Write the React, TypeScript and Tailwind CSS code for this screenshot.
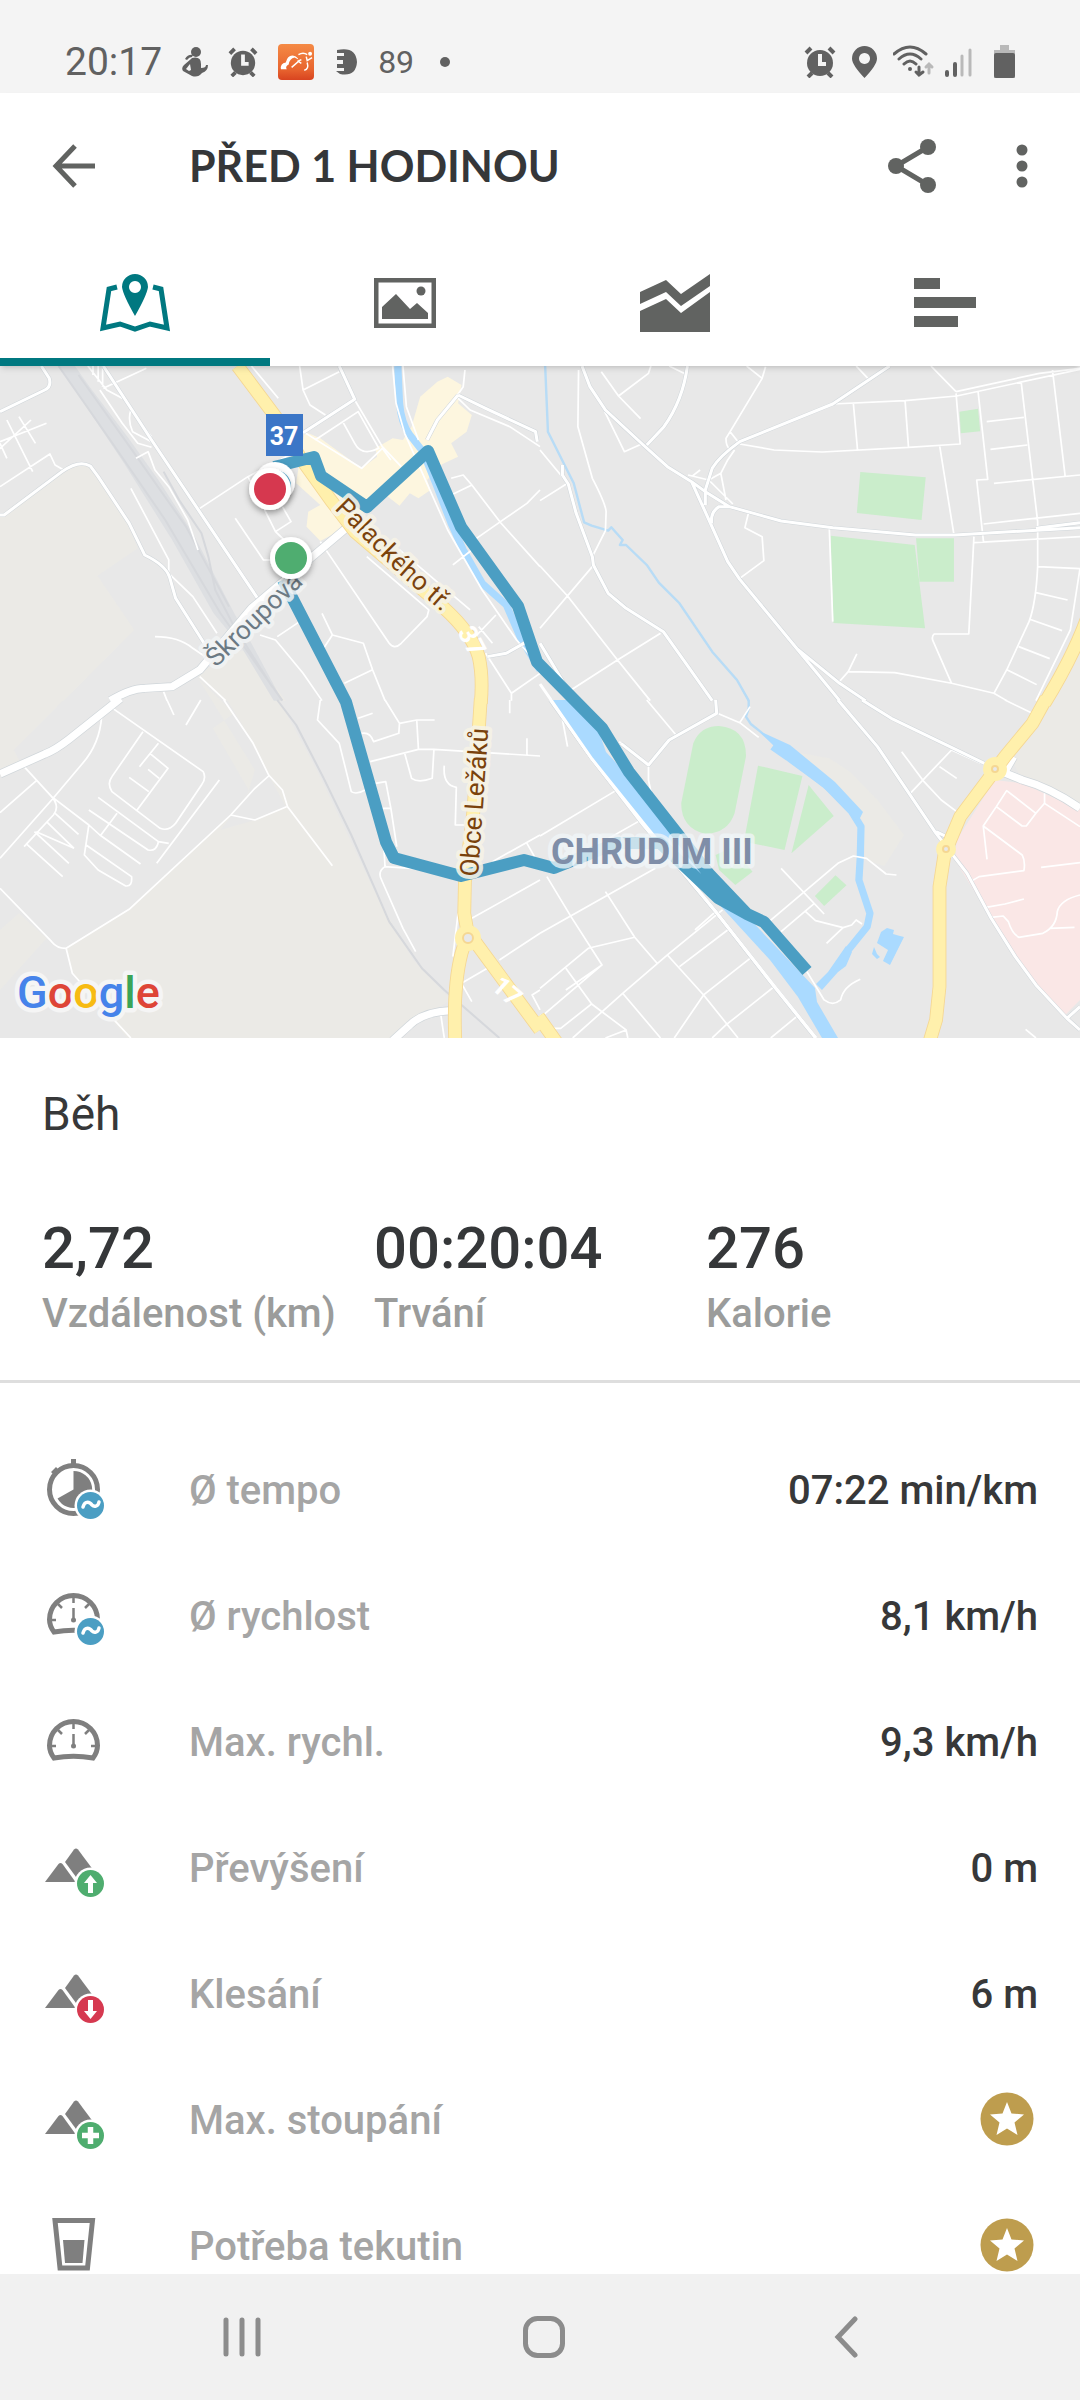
import type { ReactNode } from 'react'

/**
 * Activity detail screen: status bar, tabs, route map and session metrics
 */

type LayerName = 'field' | 'commercial' | 'hospital' | 'park' | 'yard' | 'rail' | 'stream' | 'river' | 'lane' | 'road' | 'avenue' | 'highway'

type Tile = { x: number; y: number } & Partial<Record<LayerName, string>>

// Each tile covers 540 map units across and draws in its own finer grid
const TILES: Tile[] = [
  {
    x: 0,
    y: 360,
    field:
      'M0 465 L180 335 Q230 300 270 325 L350 440 L400 565 L283 647 L390 810 L185 1022 H0Z M575 950 L655 880 L720 870 L830 1022 H650Z',
    commercial:
      'M885 215 L930 235 L1050 325 L1095 290 L1090 265 L1140 235 L1170 240 L1195 200 L1220 110 L1270 65 L1300 50 L1340 75 L1330 130 L1370 165 L1355 215 L1310 250 L1330 290 L1285 312 L1240 360 L1250 390 L1215 415 L1190 400 L1160 437 L1120 405 L1085 430 L1060 450 L1000 505 L930 543 L890 500 L895 455 L930 435 L860 370 L870 300Z',
    yard:
      'M168 10 H212 L260 80 L370 230 L460 360 L560 520 L680 760 L730 850 L820 1022 H795 L700 860 L620 760 L500 540 L360 310 L270 170Z',
    rail:
      'M170 18 L320 240 L480 480 L640 760 L820 1022 M228 45 L380 265 L540 500 L665 740 M475 335 L520 420 L585 520 L605 590 L625 690 L680 800 L790 980',
    river: 'M1155 18 L1160 130 Q1165 190 1190 225 L1228 275 L1265 370 L1310 490 L1345 570 L1400 670 L1470 735 L1510 830 L1568 930',
    lane:
      'M20 180 L95 335 M55 170 L103 250 M0 250 L20 295 M0 245 L135 190 M-5 270 L90 180 M0 380 L145 282 L160 315 L185 330 M255 18 L310 90 L355 115 M300 85 L425 25 M270 18 V45 M285 18 V65 M298 18 V80 M290 90 L355 190 L400 250 L440 262 M440 230 L380 150 Q370 180 385 215 L440 245 M395 295 L430 275 L450 330 L490 380 L545 480 L575 570 M380 385 L490 600 L490 640 M730 18 L808 115 M870 18 L880 90 L900 135 L945 165 M880 90 L985 35 M915 240 L1040 155 L1100 265 Q1050 290 1030 250 L995 185 M1030 120 L1110 260 L1165 320 M880 215 L1050 325 L1110 265 L1135 300 M580 445 L720 350 L850 280 M720 350 L800 515 L845 485 L820 440 M683 475 L765 600 H800 M800 515 L845 560 M930 545 L1130 850 Q1145 870 1165 850 L1240 770 L1245 750 L1065 590 M1160 570 L1365 750 M1140 18 L1150 130 L1175 220 L1300 510 L1400 690 L1500 840 L1568 920 M1170 18 L1180 140 L1215 240 M1310 355 L1345 345 L1370 375 L1455 490 L1568 620 M1310 405 L1370 375 M1370 545 L1530 430 L1568 390 M1315 615 L1370 570 M755 825 L800 840 L820 865 L880 940 L935 1022 M805 830 L870 785 M935 760 L965 825 L930 880 M965 825 L1055 850 L1082 930 L1118 1022 M1000 970 L1080 930 M450 830 Q520 830 560 865 L610 900 M490 640 L560 710 L630 820 M1350 30 L1345 80 L1325 110 L1365 150 L1480 200 L1568 260 M1410 880 L1485 1000 L1568 940 M1485 1000 V1022 M1380 830 L1440 765 M1390 800 L1430 850 M580 950 L655 1022 M475 995 L485 1022',
    road:
      'M0 155 L130 90 Q150 80 143 55 L120 18 M0 465 H12 L180 335 Q230 298 262 318 L285 350 L375 490 L420 585 Q480 615 492 650 L510 715 L605 870 M300 18 L440 240 L750 718 M985 18 L1030 118 L880 218 M1330 105 L1270 180 L1240 240 M1330 105 L1410 145 L1555 215 L1560 245 M1415 890 L1470 880 L1530 845 M755 720 L640 900',
    avenue: 'M320 1022 Q380 985 420 985 L500 980 L580 930 L730 745 L850 640 L1010 500',
    highway: 'M690 18 L800 170 L870 290 L960 420 L1030 515 L1290 745 Q1370 820 1390 890 Q1403 950 1396 1030',
  },
  {
    x: 540,
    y: 360,
    field: 'M1568 860 L1490 1022 H1568Z',
    park: 'M930 336 L1120 352 L1108 480 L920 459Z M1218 155 L1272 146 L1278 214 L1222 220Z M844 527 L1088 555 L1118 805 L852 789Z M1092 535 H1202 V665 H1102Z',
    stream: 'M15 18 L23 215 L98 370 L128 487 L150 497 L198 512 L207 502 L240 540 L232 555 L250 555 L310 615 L345 668 L405 730 L500 875 L572 960 L606 1022',
    lane:
      'M112 30 L110 200 L152 355 Q190 430 192 455 L190 512 L152 590 M0 270 L80 370 L0 422 M0 618 L80 708 L225 900 L320 1022 M152 620 L0 805 M350 820 L225 900 L90 990 M178 35 L228 108 L292 176 M228 108 L315 40 L322 18 M188 155 L245 275 L300 250 M375 18 L418 40 M600 18 L645 55 L655 20 M645 55 L552 215 L540 235 Q540 260 550 265 M552 215 L575 245 M918 18 L952 55 M1135 18 L1208 95 M580 252 L680 270 L820 276 L1070 262 L1220 252 L1208 100 M850 132 L1060 122 L1210 108 L1568 28 M910 132 L922 270 M1060 122 L1070 262 M1160 255 L1202 525 M1208 95 L1450 40 L1568 25 M1272 95 L1300 358 L1268 360 L1288 548 M1260 548 L1568 530 M1288 492 L1568 460 M1397 65 L1445 485 V620 Q1440 730 1420 785 L1355 930 L1318 1000 M1297 185 L1405 172 M1308 268 L1415 255 M1318 370 L1568 345 M1488 30 L1525 350 M1445 620 L1568 626 M1440 698 L1532 720 M1422 778 L1516 812 M1390 860 L1480 896 M1357 930 L1442 974 M1260 530 L1245 822 H1145 Q1135 830 1142 845 L1195 970 M840 505 L850 785 M605 460 L595 503 L645 530 L650 602 L580 655 M920 882 L895 935 L865 970 M895 935 L1030 938 L1195 970 L1318 1000 L1355 1022 M430 345 L490 360 L525 340 L545 300 L565 270 M440 350 L465 330 M490 360 L560 432 M525 340 L540 420 M1568 625 L1540 810 L1440 1022',
    road:
      'M122 18 L145 80 L190 150 L300 255 L370 320 L440 365 L480 395 L550 440 L700 483 L850 503 L1090 525 H1205 L1568 503 M1440 505 L1568 488 M428 18 Q415 120 360 200 L310 255 M1015 18 L850 132 L580 245 Q520 290 500 325 L480 390 V435 M440 365 L495 490 L545 605 L580 658 L745 865 L870 1022 M745 865 L870 970 L945 1022 M550 440 L520 440 Q495 455 498 490 M65 315 V345 L82 372 L105 460 L152 590 L155 615 L198 700 L250 745 L358 815 L420 905 L500 1022 M0 850 L100 1022',
    highway: 'M1600 740 Q1560 870 1465 1030',
  },
  {
    x: 0,
    y: 700,
    field:
      'M0 0 H185 L40 150 L60 190 L0 230Z M575 -65 L680 40 L618 85 L725 275 L640 390 L740 360 L830 320 L780 225 L700 70 L660 0 H810 L920 210 L1100 600 L1200 780 L1310 900 L1230 950 L1140 1014 H370 L210 820 L195 745 L375 630 L670 345 L720 280 L740 210Z M0 690 L55 640 L135 715 L0 870Z',
    rail: 'M805 0 L860 75 L940 235 L1020 405 L1090 570 L1130 665 L1225 805 L1290 870 L1450 1014',
    lane:
      'M320 20 L590 215 Q600 235 585 255 L510 370 Q490 395 465 385 L325 275 Q310 250 325 230 L415 95 M295 50 Q290 130 240 190 L150 300 L0 475 M70 200 L150 290 L258 375 L290 405 L408 492 M0 338 L105 243 M150 290 Q175 320 155 345 L70 440 M105 395 L215 445 M75 430 L182 530 M100 395 L200 490 M135 365 L215 445 M160 340 L228 403 M258 375 L245 465 L285 510 L365 558 Q385 560 382 530 L250 435 M258 330 L430 450 Q455 455 460 425 L285 292 M460 425 L490 430 M455 490 L637 240 M340 340 L293 405 M460 130 L405 200 M435 160 L488 205 L398 330 M430 208 L462 235 M375 232 L432 275 M0 565 L150 725 Q165 745 192 745 L375 628 L670 345 L740 265 L780 228 M192 745 L210 820 L300 925 L380 1014 M670 345 L740 360 L832 320 M650 0 L735 130 L780 225 L820 270 L835 320 L965 497 M485 0 L505 45 M583 0 L540 75 M930 0 L922 60 L985 130 L1020 275 Q1035 285 1060 270 M1040 55 L1082 40 M1118 0 L1160 70 L1158 100 L1085 125 Q1075 95 1050 100 M1160 70 L1210 60 H1262 M1210 60 L1215 148 L1075 185 M1215 148 H1260 L1568 168 M1175 160 L1195 235 Q1215 250 1255 235 L1260 148 M1530 115 V165 M1290 197 Q1285 255 1325 262 L1322 375 H1350 M1090 250 L1120 245 L1135 325 L1152 440 M1110 325 H1135 M1115 450 L1118 500 Q1095 515 1108 540 L1170 685 L1207 755 M1115 500 L1300 512 M1370 655 L1568 540 M1430 485 L1568 405 M1530 430 L1552 470 M1450 780 L1568 700 M1340 850 L1440 790 M1340 850 L1370 905 M1480 0 V40 M1280 945 L1290 1014 M1330 640 L1315 770 M1568 870 L1545 885 L1568 930',
    avenue: 'M0 222 L130 162 Q160 150 200 118 L350 -5 M1140 1022 L1190 975 Q1230 935 1310 932',
    highway: 'M1396 -5 L1375 330 L1350 545 L1348 640 L1358 700 L1340 760 Q1315 860 1322 1022 M1362 700 L1390 740 L1568 990',
  },
  {
    x: 540,
    y: 700,
    field: 'M735 155 L840 175 L900 215 L980 300 L1057 405 L1000 498 L945 480 L935 360 L850 260Z M1480 -10 H1568 V315 L1390 220 L1370 180Z',
    hospital: 'M1320 240 L1400 250 L1568 330 V900 L1525 945 L1440 860 L1300 640 L1205 480 L1210 420Z',
    park: 'M445 130 Q465 78 520 78 Q600 85 598 170 L565 340 Q545 400 480 402 Q410 385 410 310Z M633 197 L762 228 L710 450 L592 425Z M780 255 L853 348 L730 460Z M510 465 L560 440 L617 515 L567 555 L520 510Z M858 526 L890 556 L825 618 L798 588Z',
    stream: 'M606 0 V25 L598 50 L612 72 L640 95 L700 150',
    river: 'M675 140 L720 172 L830 255 L905 335 L932 380 L930 470 L926 540 L958 640 L950 680 L895 750',
    lane:
      'M60 30 L80 140 M220 272 L0 408 M290 362 L140 450 M310 0 L395 105 M515 40 L580 68 L610 20 M580 68 L635 112 M230 125 L315 195 V240 L325 290 M700 505 L825 642 M665 665 L865 490 L910 468 L948 475 L1005 522 L1035 525 M700 695 L795 612 M768 632 L800 662 L880 683 L905 675 L918 660 L935 672 M880 683 L832 730 M775 815 L825 900 Q850 920 873 900 Q880 860 930 838 M1050 155 L1115 245 L1165 300 L1210 335 M1195 150 L1075 280 M1160 200 L1210 235 M1195 150 L1280 190 M530 630 L370 765 L240 880 L95 1014 M510 635 L450 690 M545 690 L405 800 M610 775 L475 885 L390 1014 M680 860 L540 975 L500 1014 M745 950 L670 1014 M20 530 L90 650 L180 795 L75 870 M0 700 L335 505 M190 575 L275 712 L340 790 M0 865 L140 745 L275 712 M10 945 L180 795 M75 805 L150 912 L250 990 L255 1014 M250 990 L190 1014 M0 945 L40 985 H60 L150 912 M240 880 L350 1014 M370 765 L475 885 L575 1014 M1410 988 L1440 1014 M1325 320 L1355 272 L1440 340 L1412 378 H1400 L1325 320 L1287 378 L1298 478 M1287 378 L1400 465 Q1410 485 1405 512 L1275 530 L1250 545 M1440 340 L1465 310 L1568 380 M1465 310 V280 M1455 502 L1568 488 M1295 622 L1350 612 L1405 597 M1310 652 L1345 648 L1360 665 Q1370 700 1390 712 L1460 700 Q1500 680 1502 635 Q1510 600 1568 585 M1480 685 L1552 682 M1350 0 L1440 45',
    road:
      'M30 0 L150 175 L300 375 L510 635 L680 860 L800 1014 M865 0 L980 140 L1150 400 L1240 520 L1310 655 L1380 770 L1440 855 L1530 955 L1568 990 M935 0 L1020 55 L1190 140 L1290 190 M1530 955 L1568 920 M510 0 L513 40 L375 120 L315 195 L235 130 M1150 395 L1180 410',
    avenue: 'M1340 215 L1400 240 Q1480 262 1568 325 M1375 170 L1350 215',
    highway:
      'M1470 -5 L1430 70 L1350 170 L1318 215 L1220 350 L1175 460 L1160 560 V860 L1150 960 L1132 1022 M-5 950 L50 1030',
  },
]

const LAYERS: { name: LayerName; fill?: string; stroke?: string; width?: number }[] = [
  { name: 'field', fill: '#ebeae6' },
  { name: 'commercial', fill: '#fdf6df' },
  { name: 'hospital', fill: '#fae7e6' },
  { name: 'park', fill: '#caedcb' },
  { name: 'yard', fill: '#dddfe2' },
  { name: 'rail', stroke: '#d6d8dc', width: 6 },
  { name: 'stream', stroke: '#b8dcf6', width: 7 },
  { name: 'river', stroke: '#aadaff', width: 21 },
  { name: 'lane', stroke: '#ffffff', width: 5 },
  { name: 'road', stroke: '#d0d6da', width: 12 },
  { name: 'road', stroke: '#ffffff', width: 9 },
  { name: 'avenue', stroke: '#d0d6da', width: 26 },
  { name: 'avenue', stroke: '#ffffff', width: 22 },
  { name: 'highway', stroke: '#f5d793', width: 40 },
  { name: 'highway', stroke: '#fff0ac', width: 35 },
]

const ROUTE =
  'M274 467 L282 465 L314 457 L321 476 L367 507 L428 451 L461 527 L518 606 L537 662 L602 728 L629 772 L709 874 L747 914 L764 922 L807 971 M747 914 L718 898 L660 843 H617 L554 868 L524 860 L461 876 L394 858 L386 842 L346 702 L283 580'

const GOOGLE = [
  ['G', '#4683ea'],
  ['o', '#de4537'],
  ['o', '#f7bb12'],
  ['g', '#4683ea'],
  ['l', '#3ba457'],
  ['e', '#de4537'],
]

function RouteMap() {
  return (
    <svg viewBox="0 366 1080 672" className="block w-full bg-[#e8e8e8] font-['Roboto',sans-serif]" role="img" aria-label="Mapa trasy">
      <defs>
        <path id="palackeho" d="M334 509 L400 575 L460 628" />
        <filter id="pin-shadow" x="-30%" y="-30%" width="160%" height="170%">
          <feDropShadow dx="0" dy="3" stdDeviation="3" floodOpacity="0.35" />
        </filter>
      </defs>

      {LAYERS.map((layer, i) => (
        <g
          key={i}
          fill={layer.fill ?? 'none'}
          stroke={layer.stroke}
          strokeWidth={layer.width}
          strokeLinejoin="round"
        >
          {TILES.map((tile) => (
            <path
              key={`${tile.x}-${tile.y}`}
              d={tile[layer.name]}
              transform={`translate(${tile.x} ${tile.y}) scale(0.3444 0.3333)`}
            />
          ))}
        </g>
      ))}

      {/* wide part of the river and the pools */}
      <g fill="#aadaff">
        <path d="M553 700 L582 700 L600 735 L606 752 L655 805 L685 850 L730 898 L815 988 L817 1002 L838 1038 H822 L798 997 L770 960 L726 912 L680 862 L640 820 L590 757Z" />
        <path d="M759 731 L790 762 L830 793 L858 822 L863 812 L835 782 L790 745Z" />
        <path d="M846 946 L852 952 L846 966 L838 972 L822 990 L816 984 L828 972Z" />
        <path d="M887 928 L894 930 L893 934 L900 936 L904 937 L897 951 L890 965 L883 961 L888 950 L877 943 L881 932Z M874 947 L877 954 L880 957 L877 959 L872 954Z" />
      </g>
      <path d="M540 684 L592 759 L645 825 L716 912 L775 987 L816 1038" fill="none" stroke="#ffffff" strokeWidth="3" />

      {/* roundabouts */}
      <g fill="#fff0ac" stroke="#f5d793">
        <circle cx="995" cy="769" r="12" stroke="none" />
        <circle cx="946" cy="849" r="10" stroke="none" />
        <circle cx="468" cy="938" r="13" stroke="none" />
        <circle cx="995" cy="769" r="3" fill="#e8e8e8" strokeWidth="2" />
        <circle cx="946" cy="849" r="3" fill="#e8e8e8" strokeWidth="2" />
        <circle cx="468" cy="938" r="5" fill="#e8e8e8" strokeWidth="2" />
      </g>

      <path d={ROUTE} fill="none" stroke="#4b9ec3" strokeWidth="12" strokeLinejoin="round" />

      <g fontSize="26" strokeLinejoin="round" paintOrder="stroke">
        <text fill="#7a420c" stroke="#f6f3e6" strokeOpacity="0.9" strokeWidth="8">
          <textPath href="#palackeho">Palackého tř.</textPath>
        </text>
        <text transform="translate(478 877) rotate(-86)" fill="#7a420c" stroke="#f6f3e6" strokeOpacity="0.9" strokeWidth="8">
          Obce Ležáků
        </text>
        <text transform="translate(216 668) rotate(-44)" fill="#6c7a84" stroke="#f2f4f5" strokeOpacity="0.85" strokeWidth="8">
          Škroupová
        </text>
        <text x="551" y="864" fill="#7f8ea8" stroke="#f1f6f9" strokeOpacity="0.75" strokeWidth="9" fontSize="36" fontWeight="700">
          CHRUDIM III
        </text>
        <text transform="translate(457 632) rotate(62)" fill="#ffffff" fontWeight="700">37</text>
        <text transform="translate(490 988) rotate(42)" fill="#ffffff" fontWeight="700">17</text>
      </g>

      <g filter="url(#pin-shadow)">
        <circle cx="275" cy="482" r="20" fill="#ffffff" />
        <circle cx="275" cy="486" r="16" fill="#4b9ec3" />
      </g>
      <g filter="url(#pin-shadow)">
        <circle cx="270" cy="489" r="21" fill="#ffffff" />
        <circle cx="270" cy="489" r="16" fill="#d63950" />
      </g>
      <g filter="url(#pin-shadow)">
        <circle cx="291" cy="558" r="21" fill="#ffffff" />
        <circle cx="291" cy="558" r="16" fill="#4fad6f" />
      </g>

      <rect x="266" y="414" width="37" height="42" fill="#3b76c7" />
      <text x="284" y="445" textAnchor="middle" fill="#ffffff" fontSize="25" fontWeight="700">37</text>

      <text x="17" y="1008" fontSize="45" fontWeight="500" stroke="#f5f5f5" strokeWidth="9" strokeLinejoin="round" paintOrder="stroke">
        {GOOGLE.map(([letter, color], i) => (
          <tspan key={i} fill={color}>{letter}</tspan>
        ))}
      </text>
    </svg>
  )
}

function AlarmIcon({ className }: { className: string }) {
  return (
    <svg viewBox="0 0 32 32" className={className} fill="none" stroke="#616161">
      <circle cx="16" cy="17" r="13" fill="#616161" stroke="none" />
      <path d="M2 7 L7 2 M30 7 L25 2" strokeWidth="4" />
      <path d="M4 31 L8 27 M28 31 L24 27" strokeWidth="4" />
      <path d="M16 8 V18 H22" stroke="#f4f4f4" strokeWidth="4" />
    </svg>
  )
}

function StatusBar() {
  return (
    <div className="flex h-[93px] shrink-0 items-center justify-between bg-[#f4f4f4] px-[65px] pt-[30px] text-[#616161]">
      <div className="flex items-center gap-5">
        <span className="text-[39px] leading-10">20:17</span>
        <svg viewBox="0 0 26 30" className="w-[26px]" fill="#616161">
          <circle cx="14" cy="5" r="5" />
          <path d="M3 12 Q6 7 11 8 L10 10 Q7 10 5 13Z" />
          <path d="M10 11 Q19 9 19 17 L19 21 Q24 21 24 18 L26 18 Q26 24 20 26 Q16 31 10 29 L1 24 Q-1 21 2 18 L9 12Z" />
          <path d="M4 22 L8 17 L9 23 L7 24Z" fill="#f4f4f4" />
        </svg>
        <AlarmIcon className="w-[30px]" />
        <svg viewBox="0 0 37 37" className="w-9">
          <defs>
            <linearGradient id="app-icon" x1="0" y1="0" x2="0" y2="1">
              <stop offset="0" stopColor="#f58a45" />
              <stop offset="0.7" stopColor="#e8652f" />
              <stop offset="1" stopColor="#d84420" />
            </linearGradient>
          </defs>
          <rect width="37" height="37" rx="4" fill="url(#app-icon)" />
          <path d="M3 26 Q2 20 8 19 Q10 11 16 12 Q20 13 21 16 L17 14 Q12 15 11 21 Q7 23 9 26Z" fill="#ffffff" />
          <path d="M14 24 L21 18 L24 20 M20 18 L24 16 M21 11 Q26 8 30 11 M29 13 L30 17 L35 14 M30 19 Q32 26 27 27" fill="none" stroke="#ffffff" strokeWidth="1.5" />
          <circle cx="33" cy="10" r="2" fill="#ffffff" />
        </svg>
        <svg viewBox="0 0 24 26" className="w-6">
          <path d="M3 1 Q22 -3 23 13 Q22 28 6 25 L2 22 H10 V19 H3 V15 H9 V11 H3 V7 H10 V4 H3Z" fill="#616161" />
        </svg>
        <span className="text-[32px] leading-10">89</span>
        <svg viewBox="0 0 20 10" className="w-5">
          <circle cx="11" cy="5" r="5" fill="#616161" />
        </svg>
      </div>
      <div className="flex items-center gap-4">
        <AlarmIcon className="w-8" />
        <svg viewBox="0 0 25 32" className="w-[25px]">
          <path fillRule="evenodd" d="M12.5 0 A12.5 12.5 0 0 1 25 12.5 Q25 19 12.5 32 Q0 19 0 12.5 A12.5 12.5 0 0 1 12.5 0Z M12.5 7 a5.5 5.5 0 1 0 .01 0Z" fill="#616161" />
        </svg>
        <svg viewBox="0 0 80 34" className="w-20" fill="none" stroke="#616161" strokeWidth="3" strokeLinecap="round">
          <path d="M1 9 Q17 -5 33 9 M6 14 Q17 4 28 14 M11 19 Q17 13 23 19" />
          <circle cx="17" cy="24" r="2" fill="#616161" stroke="none" />
          <path d="M26 22 V30 M23 27 L26 30 L30 27" />
          <path d="M36 28 V20 M33 22 L36 19 L39 22" stroke="#b9b9b9" />
          <path d="M54 27 V30 M62 19 V30" strokeWidth="4" />
          <path d="M69 11 V30 M77 5 V30" stroke="#b9b9b9" />
        </svg>
        <svg viewBox="0 0 26 34" className="w-[26px]">
          <path d="M11 0 H20 V5 H26 V33 H5 V5 H11Z" fill="#b9b9b9" />
          <rect x="5" y="8" width="21" height="25" rx="2" fill="#616161" />
        </svg>
      </div>
    </div>
  )
}

function AppBar() {
  return (
    <header className="flex h-[146px] items-center px-[52px]">
      <button type="button" aria-label="Zpět">
        <svg viewBox="0 0 44 44" className="w-11" fill="none" stroke="#616361" strokeWidth="5">
          <path d="M43 22 H4 M23 2 L4 22 L23 42" />
        </svg>
      </button>
      <h1 className="ml-[93px] grow font-['Lato',sans-serif] text-[43px] leading-[56px] font-bold text-[#353739]">
        PŘED 1 HODINOU
      </h1>
      <button type="button" aria-label="Sdílet">
        <svg viewBox="0 0 48 54" className="w-12" fill="#616361">
          <path d="M40 8 L8 27 L40 46" fill="none" stroke="#616361" strokeWidth="5" />
          <circle cx="40" cy="8" r="8" />
          <circle cx="8" cy="27" r="8" />
          <circle cx="40" cy="46" r="8" />
        </svg>
      </button>
      <button type="button" aria-label="Další možnosti" className="ml-20">
        <svg viewBox="0 0 12 44" className="w-3" fill="#616361">
          <circle cx="6" cy="6" r="5.5" />
          <circle cx="6" cy="22" r="5.5" />
          <circle cx="6" cy="38" r="5.5" />
        </svg>
      </button>
    </header>
  )
}

const TABS: { label: string; icon: ReactNode }[] = [
  {
    label: 'Mapa',
    icon: (
      <svg viewBox="0 0 70 58" className="w-[70px]">
        <path d="M17 13 L9 15 L3 54 L20 50 L35 55 L50 50 L67 54 L61 15 L53 13" fill="none" stroke="#007880" strokeWidth="5" />
        <path fillRule="evenodd" d="M35 0 A13 13 0 0 1 48 13 Q47 21 35 42 Q23 21 22 13 A13 13 0 0 1 35 0Z M35 7 a6 6 0 1 0 .01 0Z" fill="#007880" />
      </svg>
    ),
  },
  {
    label: 'Fotky',
    icon: (
      <svg viewBox="0 0 62 50" className="w-[62px]" fill="#616361">
        <rect x="2" y="2" width="58" height="46" fill="none" stroke="#616361" strokeWidth="5" />
        <circle cx="47" cy="13" r="4.5" />
        <path d="M8 29 L22 16 L36 31 L43 25 L54 35 V41 H8Z" />
      </svg>
    ),
  },
  {
    label: 'Grafy',
    icon: (
      <svg viewBox="0 0 70 58" className="w-[70px]" fill="#616361">
        <path d="M0 18 L26 6 L41 20 L70 0 V12 L41 32 L26 18 L0 30Z" />
        <path d="M0 37 L26 25 L41 39 L70 18 V58 H0Z" />
      </svg>
    ),
  },
  {
    label: 'Mezičasy',
    icon: (
      <svg viewBox="0 0 62 50" className="w-[62px]" fill="#616361">
        <rect width="26" height="11" />
        <rect y="19" width="62" height="11" />
        <rect y="38" width="44" height="11" />
      </svg>
    ),
  },
]

function TabBar() {
  return (
    <div role="tablist" className="grid h-[127px] grid-cols-4">
      {TABS.map((tab, i) => (
        <button
          key={tab.label}
          type="button"
          role="tab"
          aria-label={tab.label}
          aria-selected={i === 0}
          className="flex items-center justify-center border-b-8 border-transparent pt-2 aria-selected:border-[#007880]"
        >
          {tab.icon}
        </button>
      ))}
    </div>
  )
}

function MetricIcon({ children }: { children: ReactNode }) {
  return (
    <svg viewBox="0 0 72 72" className="w-[72px] shrink-0" fill="#7f7f7f">
      {children}
    </svg>
  )
}

function Badge({ color, children }: { color: string; children: ReactNode }) {
  return (
    <>
      <circle cx="48.5" cy="50.5" r="16" fill="#ffffff" />
      <circle cx="48.5" cy="50.5" r="13.5" fill={color} />
      {children}
    </>
  )
}

function AverageBadge() {
  return (
    <Badge color="#4b9ec3">
      <path d="M41 52 C43 45 48 47 50 50 C52 52 56 52 57 47" fill="none" stroke="#ffffff" strokeWidth="3.5" strokeLinecap="round" />
    </Badge>
  )
}

function Gauge() {
  return (
    <g fill="none" stroke="#7f7f7f">
      <path d="M12 51 Q7.5 45 7.5 38.5 A24 24 0 0 1 55.5 38.5 Q55.5 45 51 51 Q31.5 47.5 12 51Z" strokeWidth="5" />
      <path d="M31.5 16 V22 M9 39 H14 M49 39 H54 M16 23 L20 27 M47 23 L43 27 M31.5 27 V39" strokeWidth="2.5" />
      <circle cx="31.5" cy="39" r="2.5" fill="#7f7f7f" stroke="none" />
    </g>
  )
}

function Mountains() {
  return (
    <>
      <path d="M3 49 L16.5 31 Q18.5 29 20.5 31 L33.5 49Z" />
      <path d="M23 29 L32 16.5 Q34 14.5 36 16.5 L52 38 L34 44Z" />
    </>
  )
}

function StarButton({ label }: { label: string }) {
  return (
    <button type="button" aria-label={`${label} – Premium`} className="mr-1 mb-1 block">
      <svg viewBox="0 0 54 54" className="w-[54px]">
        <circle cx="27" cy="27" r="26.5" fill="#be9d4e" />
        <path d="M27 10 L31.5 21.5 L44 22.5 L34.5 30.5 L37.5 43 L27 36.5 L16.5 43 L19.5 30.5 L10 22.5 L22.5 21.5Z" fill="#ffffff" />
      </svg>
    </button>
  )
}

const METRICS: { label: string; value?: string; icon: ReactNode }[] = [
  {
    label: 'Ø tempo',
    value: '07:22 min/km',
    icon: (
      <>
        <circle cx="31.5" cy="34.5" r="24" fill="none" stroke="#7f7f7f" strokeWidth="5" />
        <path d="M29 4 H34 V10 H29Z M9 17 L14 12 L17 15 L12 20Z" />
        <path d="M31.5 16 A18.5 18.5 0 1 1 15.5 43.5 L31.5 34.5Z" />
        <AverageBadge />
      </>
    ),
  },
  {
    label: 'Ø rychlost',
    value: '8,1 km/h',
    icon: (
      <>
        <Gauge />
        <AverageBadge />
      </>
    ),
  },
  { label: 'Max. rychl.', value: '9,3 km/h', icon: <Gauge /> },
  {
    label: 'Převýšení',
    value: '0 m',
    icon: (
      <>
        <Mountains />
        <Badge color="#4fad6f">
          <path d="M48.5 42 L55 50 H51 V60 H46 V50 H42Z" fill="#ffffff" />
        </Badge>
      </>
    ),
  },
  {
    label: 'Klesání',
    value: '6 m',
    icon: (
      <>
        <Mountains />
        <Badge color="#d63950">
          <path d="M48.5 60 L55 52 H51 V41 H46 V52 H42Z" fill="#ffffff" />
        </Badge>
      </>
    ),
  },
  {
    label: 'Max. stoupání',
    icon: (
      <>
        <Mountains />
        <Badge color="#4fad6f">
          <path d="M48.5 42 V59 M40 50.5 H57" stroke="#ffffff" strokeWidth="5.5" />
        </Badge>
      </>
    ),
  },
  {
    label: 'Potřeba tekutin',
    icon: (
      <>
        <path d="M13 9.5 H50.5 L45.5 57 H18Z" fill="none" stroke="#7f7f7f" strokeWidth="5" />
        <path d="M21 29 H42.5 L40.5 52 H23Z" />
      </>
    ),
  },
]

const SUMMARY = [
  { label: 'Vzdálenost (km)', value: '2,72' },
  { label: 'Trvání', value: '00:20:04' },
  { label: 'Kalorie', value: '276' },
]

function NavigationBar() {
  return (
    <nav className="grid h-[126px] shrink-0 grid-cols-3 justify-items-center bg-[#f1f1f1] pr-[83px] pl-[91px]">
      <button type="button" aria-label="Poslední aplikace">
        <svg viewBox="0 0 42 42" className="w-[42px]" stroke="#8c8c8c" strokeWidth="5" strokeLinecap="round">
          <path d="M5 4 V38 M21 4 V38 M37 4 V38" />
        </svg>
      </button>
      <button type="button" aria-label="Domů">
        <svg viewBox="0 0 42 42" className="w-[42px]" fill="none" stroke="#8c8c8c" strokeWidth="5">
          <rect x="2.5" y="2.5" width="37" height="37" rx="12" />
        </svg>
      </button>
      <button type="button" aria-label="Zpět">
        <svg viewBox="0 0 42 42" className="w-[42px]" fill="none" stroke="#8c8c8c" strokeWidth="5" strokeLinecap="round">
          <path d="M30 3 L13 21 L30 39" />
        </svg>
      </button>
    </nav>
  )
}

export default function App() {
  return (
    <div className="flex h-screen flex-col bg-white font-['Roboto',sans-serif] text-[#373839]">
      <StatusBar />
      <div className="relative z-10 shrink-0 bg-white shadow-md">
        <AppBar />
        <TabBar />
      </div>

      <main className="min-h-0 grow overflow-y-auto [scrollbar-width:none]">
        <RouteMap />

        <section className="border-b-[3px] border-[#dedede] px-[42px] pt-[46px] pb-[42px]">
          <h2 className="text-[46px] leading-[60px]">Běh</h2>
          <dl className="mt-[68px] grid grid-cols-3">
            {SUMMARY.map((item) => (
              <div key={item.label} className="flex flex-col-reverse gap-[6px] font-medium whitespace-nowrap">
                <dt className="text-[40px] leading-[48px] text-[#9b9c9b]">{item.label}</dt>
                <dd className="text-[58px] leading-[72px] text-[#353739]">{item.value}</dd>
              </div>
            ))}
          </dl>
        </section>

        <dl className="px-[42px] pt-[45px] text-[40px] leading-[48px] font-medium">
          {METRICS.map((metric) => (
            <div key={metric.label} className="flex h-[126px] items-center">
              <MetricIcon>{metric.icon}</MetricIcon>
              <dt className="ml-[75px] grow text-[#a5a5a5]">{metric.label}</dt>
              <dd>{metric.value ?? <StarButton label={metric.label} />}</dd>
            </div>
          ))}
        </dl>
      </main>

      <NavigationBar />
    </div>
  )
}
